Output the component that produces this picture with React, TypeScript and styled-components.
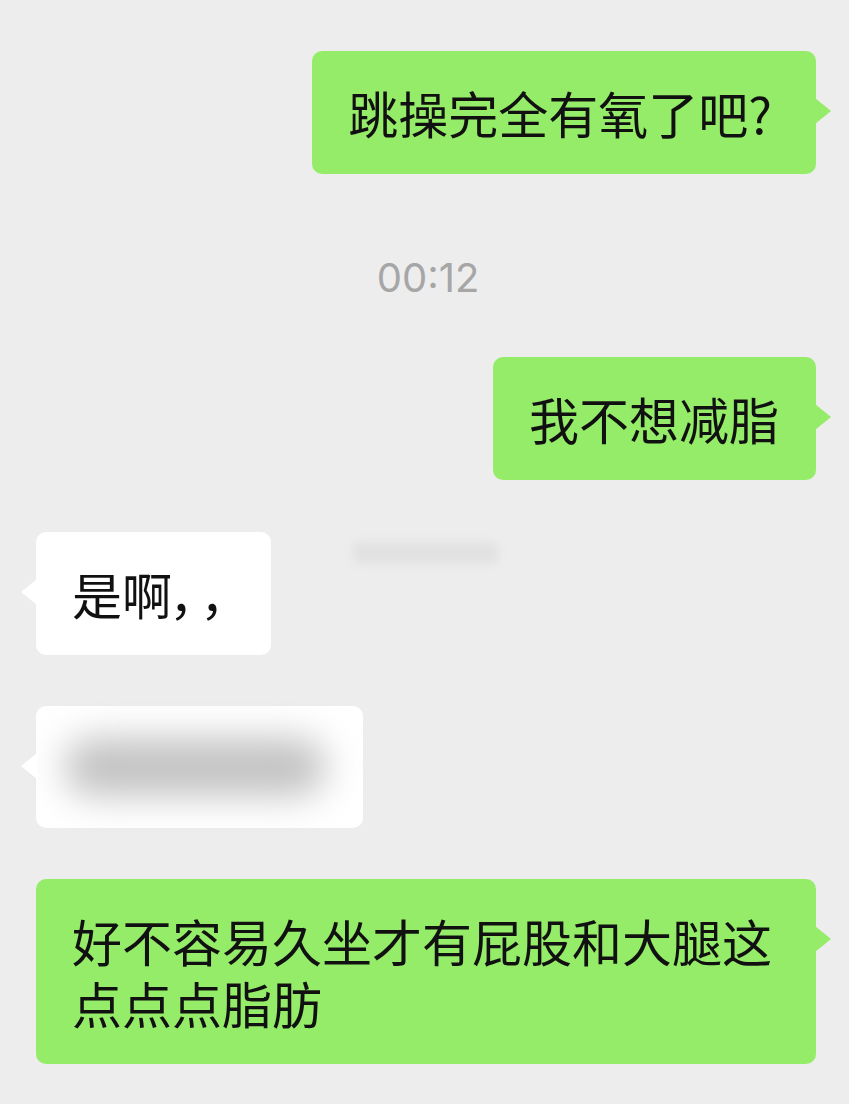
import React from "react";
import styled, { createGlobalStyle, css } from "styled-components";

const Global = createGlobalStyle`
  html, body { margin: 0; padding: 0; background: #ededed; }
  body { font-family: "Noto Sans CJK SC", "Noto Sans", sans-serif; }
`;

const Page = styled.div`
  width: 849px;
  min-height: 1104px;
  background: #ededed;
  box-sizing: border-box;
  padding: 51px 33px 0 36px;
  display: flex;
  flex-direction: column;
`;

const Row = styled.div<{ $side: "left" | "right"; $gap?: number }>`
  display: flex;
  justify-content: ${(p) => (p.$side === "right" ? "flex-end" : "flex-start")};
  align-items: flex-start;
  margin-top: ${(p) => p.$gap ?? 0}px;
`;

const Bubble = styled.div<{ $side: "left" | "right" }>`
  position: relative;
  box-sizing: border-box;
  max-width: 780px;
  padding: 30px 37px 31px 36px;
  border-radius: 10px;
  font-size: 50px;
  line-height: 62px;
  color: #111;
  background: ${(p) => (p.$side === "right" ? "#95ec69" : "#ffffff")};
  &::after {
    content: "";
    position: absolute;
    top: 47px;
    width: 0;
    height: 0;
    border-top: 13px solid transparent;
    border-bottom: 13px solid transparent;
    ${(p) =>
      p.$side === "right"
        ? css`
            right: -15px;
            border-left: 16px solid #95ec69;
          `
        : css`
            left: -15px;
            border-right: 16px solid #ffffff;
          `}
  }
`;

const Question = styled.span`
  margin-right: 7px;
`;

const Commas = styled.span`
  text-spacing-trim: space-all;
  letter-spacing: -19px;
  margin-left: -3px;
  margin-right: 3px;
`;

const Time = styled.div`
  align-self: center;
  margin: 80px 0 0 4px;
  font-family: Inter, "Liberation Sans", sans-serif;
  font-size: 40px;
  line-height: 48px;
  color: #a6a6a6;
`;

const BlurLine = styled.div`
  width: 262px;
  height: 58px;
  margin: 2px 0 1px -8px;
  border-radius: 29px;
  background: #c2c2c2;
  filter: blur(18px);
`;

const FaintLabel = styled.div`
  margin: 10px 0 0 82px;
  width: 145px;
  height: 22px;
  border-radius: 6px;
  background: #dadada;
  filter: blur(5px);
  opacity: 0.6;
`;

export default function App() {
  return (
    <>
      <Global />
      <Page>
        <Row $side="right">
          <Bubble $side="right">
            跳操完全有氧了吧<Question>?</Question>
          </Bubble>
        </Row>
        <Time>00:12</Time>
        <Row $side="right" $gap={55}>
          <Bubble $side="right">我不想减脂</Bubble>
        </Row>
        <Row $side="left" $gap={52}>
          <Bubble $side="left">
            是啊<Commas>，，</Commas>
          </Bubble>
          <FaintLabel />
        </Row>
        <Row $side="left" $gap={51}>
          <Bubble $side="left">
            <BlurLine />
          </Bubble>
        </Row>
        <Row $side="left" $gap={51}>
          <Bubble $side="right">好不容易久坐才有屁股和大腿这点点点脂肪</Bubble>
        </Row>
      </Page>
    </>
  );
}
